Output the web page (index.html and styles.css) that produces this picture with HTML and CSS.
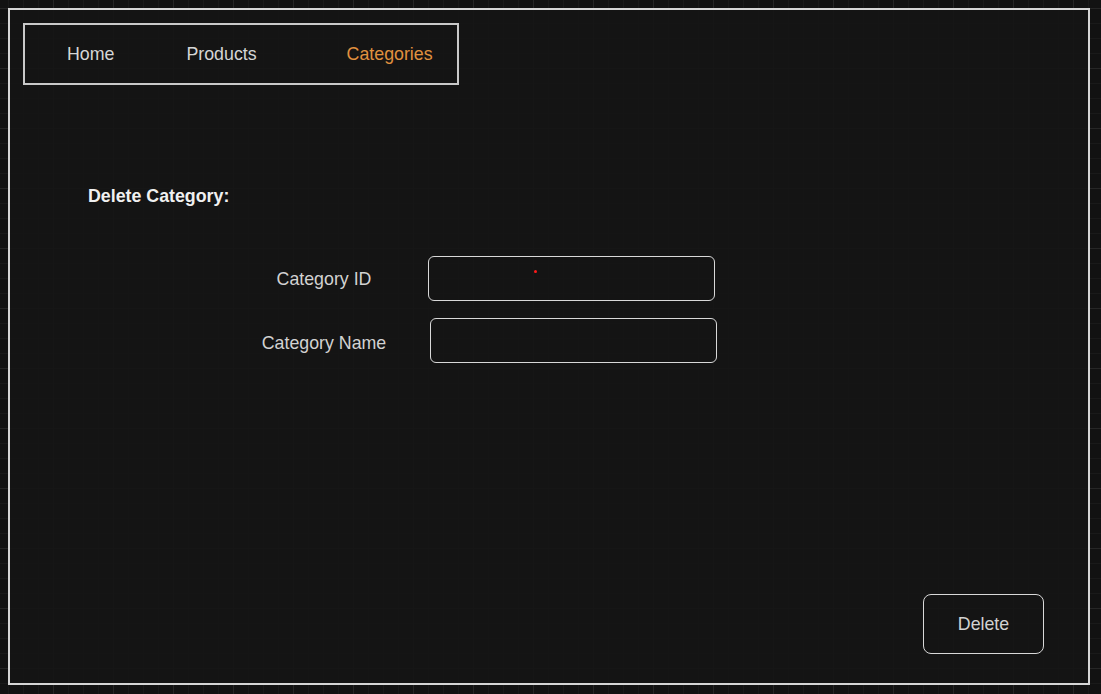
FILE: index.html
```html
<!DOCTYPE html>
<html lang="en">
<head>
<meta charset="utf-8">
<title>Delete Category</title>
<link rel="stylesheet" href="styles.css">
</head>
<body>
<div class="frame">
  <nav class="nav">
    <span class="nav-item nav-home">Home</span>
    <span class="nav-item nav-products">Products</span>
    <span class="nav-item nav-active">Categories</span>
  </nav>
  <h1 class="heading">Delete Category:</h1>
  <div class="form">
    <div class="row">
      <label class="label">Category ID</label>
      <div class="field field-id"><span class="dot"></span></div>
    </div>
    <div class="row">
      <label class="label">Category Name</label>
      <div class="field field-name"></div>
    </div>
  </div>
  <div class="footer">
    <button class="btn">Delete</button>
  </div>
</div>
</body>
</html>
```

FILE: styles.css
```css
html, body {
  margin: 0;
  padding: 0;
}
body {
  width: 1101px;
  height: 694px;
  overflow: hidden;
  font-family: "Liberation Sans", Arial, sans-serif;
  background-color: #121212;
  background-image:
    linear-gradient(#262626 1px, transparent 1px),
    linear-gradient(90deg, #262626 1px, transparent 1px),
    linear-gradient(#1a1a1a 1px, transparent 1px),
    linear-gradient(90deg, #1a1a1a 1px, transparent 1px);
  background-size: 60px 60px, 60px 60px, 15px 15px, 15px 15px;
  background-position: 8px 8px, 53px 8px, 8px 8px, 8px 8px;
  padding: 8px;
  box-sizing: border-box;
}
.frame {
  box-sizing: border-box;
  width: 1082px;
  height: 677px;
  border: 2px solid #d6d6d6;
  background: rgba(20, 20, 20, 0.88);
  display: flex;
  flex-direction: column;
  padding: 13px 44px 29px 13px;
}
.nav {
  box-sizing: border-box;
  width: 436px;
  height: 62px;
  border: 2px solid #c9c9c9;
  display: flex;
  align-items: center;
  padding-left: 42px;
  padding-bottom: 1px;
}
.nav-item {
  font-size: 17.8px;
  color: #d6d6d6;
  line-height: 20px;
}
.nav-products { margin-left: 72px; }
.nav-active { margin-left: 90px; color: #e0913f; }
.heading {
  margin: 101px 0 0 65px;
  font-size: 17.8px;
  line-height: 20px;
  font-weight: bold;
  color: #f0f0f0;
}
.form {
  margin-top: 50px;
  display: flex;
  flex-direction: column;
  gap: 17px;
}
.row {
  display: flex;
  align-items: center;
}
.label {
  width: 220px;
  margin-left: 191px;
  text-align: center;
  font-size: 17.8px;
  line-height: 20px;
  color: #d2d2d2;
}
.row:last-child .label { padding-top: 4px; }
.field {
  box-sizing: border-box;
  width: 287px;
  height: 45px;
  border: 1.5px solid #d8d8d8;
  border-radius: 6px;
  position: relative;
}
.field-id { margin-left: -6px; }
.field-name { margin-left: -4px; }
.dot {
  position: absolute;
  left: 105px;
  top: 13px;
  width: 3px;
  height: 3px;
  border-radius: 50%;
  background: #ff1a1a;
}
.footer {
  margin-top: auto;
  display: flex;
  justify-content: flex-end;
}
.btn {
  box-sizing: border-box;
  width: 121px;
  height: 60px;
  background: transparent;
  border: 1.5px solid #d8d8d8;
  border-radius: 8px;
  font-family: "Liberation Sans", Arial, sans-serif;
  font-size: 17.8px;
  color: #d2d2d2;
  padding: 0;
}
```
